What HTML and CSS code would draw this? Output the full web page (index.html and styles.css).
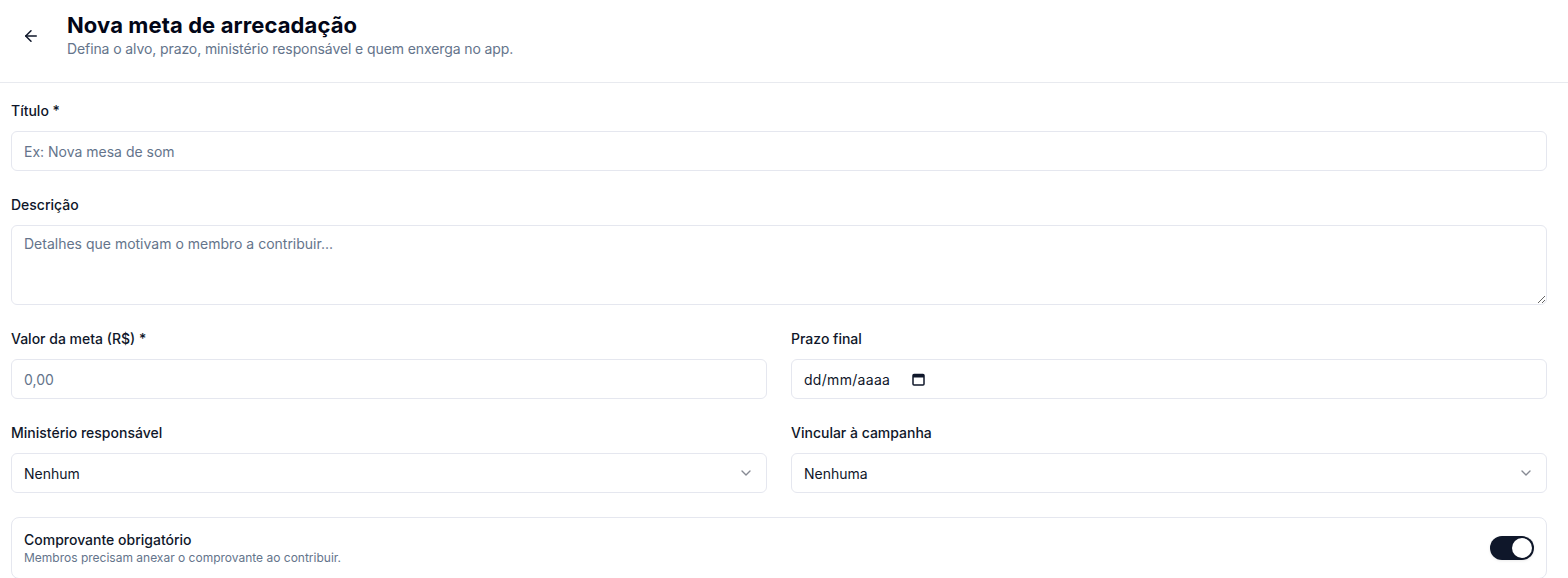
FILE: index.html
```html
<!DOCTYPE html>
<html lang="pt-BR">
<head>
    <meta charset="UTF-8">
    <meta name="viewport" content="width=device-width, initial-scale=1.0">
    <title>Nova meta de arrecadação</title>
    <link rel="stylesheet" href="styles.css">
</head>
<body>
    <header class="page-header">
        <button class="back-btn" aria-label="Voltar">
            <svg width="18" height="18" viewBox="0 0 24 24" fill="none" stroke="currentColor" stroke-width="2" stroke-linecap="round" stroke-linejoin="round">
                <path d="m12 19-7-7 7-7"/>
                <path d="M19 12H5"/>
            </svg>
        </button>
        <div class="header-text">
            <h1>Nova meta de arrecadação</h1>
            <p class="subtitle">Defina o alvo, prazo, ministério responsável e quem enxerga no app.</p>
        </div>
    </header>

    <form class="goal-form">
        <div class="field">
            <label for="titulo">Título *</label>
            <input type="text" id="titulo" placeholder="Ex: Nova mesa de som">
        </div>

        <div class="field">
            <label for="descricao">Descrição</label>
            <textarea id="descricao" placeholder="Detalhes que motivam o membro a contribuir..."></textarea>
        </div>

        <div class="row">
            <div class="field">
                <label for="valor">Valor da meta (R$) *</label>
                <input type="text" id="valor" placeholder="0,00">
            </div>
            <div class="field">
                <label>Prazo final</label>
                <div class="input date-input">
                    <span>dd/mm/aaaa</span>
                    <svg width="13" height="13" viewBox="0 0 13 13">
                        <rect x="1" y="1.5" width="11" height="10.5" rx="1" fill="none" stroke="#0f172a" stroke-width="1.5"/>
                        <rect x="1" y="1.5" width="11" height="3" fill="#0f172a"/>
                    </svg>
                </div>
            </div>
        </div>

        <div class="row">
            <div class="field">
                <label for="ministerio">Ministério responsável</label>
                <div class="select-wrap">
                    <select id="ministerio">
                        <option>Nenhum</option>
                    </select>
                    <svg class="chevron" width="16" height="16" viewBox="0 0 24 24" fill="none" stroke="currentColor" stroke-width="2" stroke-linecap="round" stroke-linejoin="round">
                        <path d="m6 9 6 6 6-6"/>
                    </svg>
                </div>
            </div>
            <div class="field">
                <label for="campanha">Vincular à campanha</label>
                <div class="select-wrap">
                    <select id="campanha">
                        <option>Nenhuma</option>
                    </select>
                    <svg class="chevron" width="16" height="16" viewBox="0 0 24 24" fill="none" stroke="currentColor" stroke-width="2" stroke-linecap="round" stroke-linejoin="round">
                        <path d="m6 9 6 6 6-6"/>
                    </svg>
                </div>
            </div>
        </div>

        <div class="switch-card">
            <div>
                <div class="switch-title">Comprovante obrigatório</div>
                <div class="switch-desc">Membros precisam anexar o comprovante ao contribuir.</div>
            </div>
            <button type="button" class="switch on" aria-pressed="true"><span class="knob"></span></button>
        </div>
    </form>
</body>
</html>
```

FILE: styles.css
```css
* {
    margin: 0;
    padding: 0;
    box-sizing: border-box;
}

body {
    font-family: 'Inter', 'Liberation Sans', sans-serif;
    color: #0f172a;
    background: #fff;
    overflow: hidden;
}

.page-header {
    display: flex;
    align-items: center;
    gap: 16px;
    padding: 11px 21px 23px 11px;
    border-bottom: 1px solid #e8eaef;
}

.back-btn {
    width: 40px;
    height: 40px;
    display: flex;
    align-items: center;
    justify-content: center;
    border: none;
    background: none;
    color: #0f172a;
    border-radius: 6px;
    margin-top: 2px;
}

h1 {
    font-size: 22px;
    line-height: 28px;
    font-weight: 700;
    letter-spacing: 0.1px;
    color: #020617;
}

.subtitle {
    font-size: 14px;
    line-height: 20px;
    letter-spacing: -0.1px;
    color: #64748b;
}

.goal-form {
    padding: 18px 21px 0 11px;
    display: flex;
    flex-direction: column;
    gap: 24px;
}

.row {
    display: grid;
    grid-template-columns: 1fr 1fr;
    gap: 24px;
}

.field label {
    display: block;
    font-size: 14px;
    line-height: 20px;
    font-weight: 500;
    margin-bottom: 10px;
}

input,
textarea,
select,
.input {
    width: 100%;
    height: 40px;
    border: 1px solid #e5e7ef;
    border-radius: 6px;
    padding: 0 12px;
    font-family: inherit;
    font-size: 14px;
    color: #0f172a;
    background: #fff;
    outline: none;
}

textarea {
    display: block;
    height: 80px;
    padding: 8px 12px;
    line-height: 20px;
    resize: vertical;
}

input::placeholder,
textarea::placeholder {
    color: #64748b;
}

.date-input {
    display: flex;
    align-items: center;
    gap: 22px;
    letter-spacing: 0.3px;
}

.select-wrap {
    position: relative;
}

select {
    appearance: none;
    -webkit-appearance: none;
}

.chevron {
    position: absolute;
    right: 13px;
    top: 12px;
    color: #0f172a;
    opacity: 0.5;
    pointer-events: none;
}

.switch-card {
    display: flex;
    align-items: center;
    justify-content: space-between;
    border: 1px solid #e5e7ef;
    border-radius: 8px;
    padding: 12px;
}

.switch-title {
    font-size: 14px;
    line-height: 20px;
    font-weight: 500;
}

.switch-desc {
    font-size: 12px;
    line-height: 16px;
    color: #64748b;
}

.switch {
    width: 44px;
    height: 24px;
    border-radius: 12px;
    border: 2px solid transparent;
    background: #0f172a;
    display: flex;
    align-items: center;
    box-shadow: 0 1px 3px rgba(0,0,0,0.08);
}

.switch .knob {
    width: 20px;
    height: 20px;
    border-radius: 50%;
    background: #fff;
    box-shadow: 0 1px 2px rgba(0,0,0,0.15);
}

.switch.on .knob {
    transform: translateX(20px);
}
```
